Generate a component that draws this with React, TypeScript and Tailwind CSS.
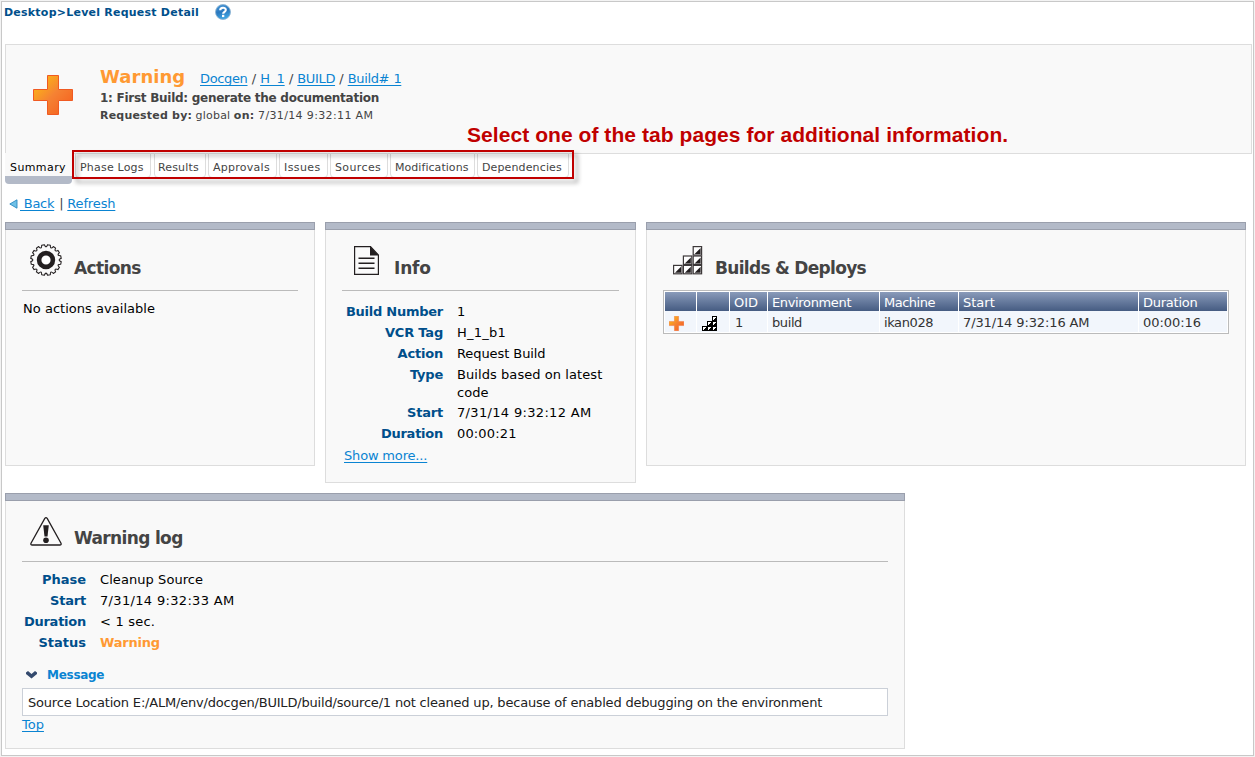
import React from "react";

type Row = { label: string; value: string; labelTrack?: string; tone?: string; gap?: string };

const link = "text-[#0a84d2] underline underline-offset-2 decoration-1 [text-decoration-skip-ink:none]";

function PlusIcon({ size }: { size: number }) {
  return (
    <svg width={size} height={size} viewBox="0 0 40 40" className="block shrink-0">
      <defs>
        <linearGradient id={`plus${size}`} x1="0" y1="0" x2="1" y2="1">
          <stop offset="0.1" stopColor="#fdb813" />
          <stop offset="0.5" stopColor="#f58233" />
          <stop offset="1" stopColor="#f55a1a" />
        </linearGradient>
      </defs>
      <path
        d="M14.5 .5h11v14h14v11h-14v14h-11v-14H.5v-11h14z"
        fill={`url(#plus${size})`}
        stroke="#f05a22"
        strokeWidth="1"
      />
    </svg>
  );
}

function HelpIcon() {
  return (
    <svg width="16" height="16" viewBox="0 0 16 16" className="block">
      <defs>
        <linearGradient id="help" x1="0" y1="0" x2=".3" y2="1">
          <stop offset="0" stopColor="#4a9bdc" />
          <stop offset=".55" stopColor="#2a78be" />
          <stop offset="1" stopColor="#3fa4e2" />
        </linearGradient>
      </defs>
      <circle cx="8" cy="8" r="7.5" fill="url(#help)" stroke="#8fb4d2" strokeWidth=".9" />
      <path d="M5.2 6.3C5.2 2.9 10.8 2.9 10.8 6C10.8 7.8 8.2 7.8 8.1 9.8" fill="none" stroke="#fff" strokeWidth="2.1" />
      <rect x="7" y="10.8" width="2.3" height="2.3" fill="#fff" />
    </svg>
  );
}

function GearIcon() {
  const n = 16;
  const pts: string[] = [];
  for (let i = 0; i < n; i++) {
    const a = ((i + 0.5) * 2 * Math.PI) / n;
    const at = (r: number, o: number) =>
      `${(16 + r * Math.cos(a + o)).toFixed(2)} ${(16 + r * Math.sin(a + o)).toFixed(2)}`;
    const start = at(15.3, -0.09);
    pts.push(`${i ? "" : "M" + start}${i ? "L" + start : ""}L${at(15.3, 0.09)}Q${at(11, 0.196)} ${at(15.3, 0.303)}`);
  }
  return (
    <svg width="32" height="32" viewBox="0 0 32 32" className="block">
      <path d={pts.join("") + "Z"} fill="#fafafa" stroke="#231f20" strokeWidth="1.1" strokeLinejoin="round" />
      <circle cx="16" cy="16" r="6.9" fill="#fff" stroke="#231f20" strokeWidth="4.6" />
    </svg>
  );
}

function PageIcon() {
  return (
    <svg width="26" height="30" viewBox="0 0 26 30" className="block">
      <path d="M.6 .6H16.5L24.4 9V28.4H.6z" fill="#fafafa" stroke="#231f20" strokeWidth="1.2" />
      <path d="M16 .3L24.8 9.5H16z" fill="#231f20" />
      <path d="M4.5 12.3H20.5M4.5 17.3H20.5M4.5 22.3H20.5" stroke="#231f20" strokeWidth="1.6" />
    </svg>
  );
}

const cells = [
  [19.6, 0],
  [9.8, 9.4],
  [19.6, 9.4],
  [0, 18.8],
  [9.8, 18.8],
  [19.6, 18.8],
];

function StairsIcon() {
  return (
    <svg width="30" height="29" viewBox="0 0 30 29" className="block">
      {cells.map(([x, y]) => (
        <g key={`${x}-${y}`}>
          <rect x={x + 0.6} y={y + 0.6} width="8.4" height="8.4" fill="#fff" stroke="#3c3839" strokeWidth="1.2" />
          <path d={`M${x + 8} ${y + 2}V${y + 8}H${x + 2}z`} fill="#231f20" />
        </g>
      ))}
    </svg>
  );
}

function SmallStairsIcon() {
  return (
    <svg width="15" height="15" viewBox="0 0 15 15" className="block" shapeRendering="crispEdges">
      <path d="M10 0h5v15H0v-5h5V5h5z" fill="#000" />
      {[
        [10, 0],
        [5, 5],
        [10, 5],
        [0, 10],
        [5, 10],
        [10, 10],
      ].map(([x, y]) => (
        <path key={`${x}-${y}`} d={`M${x + 1} ${y + 1}h3v1h-1v1h-1v1h-1z`} fill="#fff" />
      ))}
    </svg>
  );
}

function WarnIcon() {
  return (
    <svg width="32" height="29" viewBox="0 0 32 29" className="block">
      <path
        d="M14.8 1.4Q16 -.1 17.2 1.4L31 26.3Q31.6 28 29.8 28H2.2Q.4 28 1 26.3z"
        fill="#fafafa"
        stroke="#231f20"
        strokeWidth="1.3"
      />
      <path d="M13.2 8.2H18.8L17.5 19.5H14.5z" fill="#231f20" />
      <circle cx="16" cy="23.2" r="2.8" fill="#231f20" />
    </svg>
  );
}

function Panel({
  className,
  icon,
  title,
  titleClass,
  iconClass,
  rule = true,
  children,
}: {
  className: string;
  icon: React.ReactNode;
  title: string;
  titleClass: string;
  iconClass: string;
  rule?: boolean;
  children: React.ReactNode;
}) {
  return (
    <section className={`flex shrink-0 flex-col ${className}`}>
      <div className="h-2 shrink-0 border border-[#9a9fac] bg-[#b3bac8]" />
      <div className="flex grow flex-col border border-t-0 border-[#dddddd] bg-[#f9f9f9] px-4">
        <div className={`flex h-[61px] shrink-0 ${rule ? "border-b border-[#bbbbbb]" : ""}`}>
          <div className={`w-[52px] shrink-0 ${iconClass}`}>{icon}</div>
          <h2 className={`text-[17px] leading-6 font-bold whitespace-nowrap text-[#444] ${titleClass}`}>{title}</h2>
        </div>
        {children}
      </div>
    </section>
  );
}

function Details({ rows, labelWidth }: { rows: Row[]; labelWidth: string }) {
  return (
    <dl>
      {rows.map((r) => (
        <div key={r.label} className={`flex text-[13px] leading-[18px] ${r.gap ?? "mb-[3px]"}`}>
          <dt
            className={`shrink-0 text-right font-bold whitespace-nowrap text-[#004f8b] ${labelWidth} ${r.labelTrack ?? "tracking-[-0.2px]"}`}
          >
            {r.label}
          </dt>
          <dd className={`ml-[14px] whitespace-pre-line ${r.tone ?? "text-black"}`}>{r.value}</dd>
        </div>
      ))}
    </dl>
  );
}

const tabs = [
  { name: "Phase Logs", box: "w-[76px] mr-[3px] pl-1 tracking-[0.2px]" },
  { name: "Results", box: "w-[52px] mr-[2px] pl-[3px] tracking-[0.15px]" },
  { name: "Approvals", box: "w-[69px] mr-[2px] pl-1 tracking-[0.26px]" },
  { name: "Issues", box: "w-[49px] mr-[2px] pl-1 tracking-[0.4px]" },
  { name: "Sources", box: "w-[58px] mr-[2px] pl-1 tracking-[0.38px]" },
  { name: "Modifications", box: "w-[85px] mr-[2px] pl-1 tracking-[0.05px]" },
  { name: "Dependencies", box: "w-[92px] pl-1 tracking-[0.13px]" },
];

const infoRows: Row[] = [
  { label: "Build Number", value: "1", labelTrack: "tracking-[-0.25px]" },
  { label: "VCR Tag", value: "H_1_b1", tone: "text-black tracking-[0.25px]" },
  { label: "Action", value: "Request Build", tone: "text-black tracking-[-0.08px]" },
  {
    label: "Type",
    value: "Builds based on latest\ncode",
    gap: "mb-[2px]",
    tone: "text-black tracking-[0.07px]",
  },
  { label: "Start", value: "7/31/14 9:32:12 AM", tone: "text-black tracking-[0.33px]" },
  { label: "Duration", value: "00:00:21", labelTrack: "tracking-[-0.25px]", tone: "text-black tracking-[0.15px]" },
];

const logRows: Row[] = [
  { label: "Phase", value: "Cleanup Source", labelTrack: "tracking-[0px]", tone: "text-black tracking-[0.07px]" },
  { label: "Start", value: "7/31/14 9:32:33 AM", tone: "text-black tracking-[0.33px]" },
  { label: "Duration", value: "< 1 sec.", labelTrack: "tracking-[-0.25px]", tone: "text-black tracking-[0.2px]" },
  {
    label: "Status",
    value: "Warning",
    labelTrack: "tracking-[0px]",
    tone: "font-bold tracking-[-0.2px] text-[#ff9933]",
  },
];

const columns = [
  { title: "", width: "w-[31px]", titleClass: "", cellClass: "" },
  { title: "", width: "w-[32px]", titleClass: "", cellClass: "" },
  { title: "OID", width: "w-[37px]", titleClass: "", cellClass: "pl-[5px]" },
  { title: "Environment", width: "w-[111px]", titleClass: "tracking-[-0.35px]", cellClass: "tracking-[-0.4px]" },
  { title: "Machine", width: "w-[78px]", titleClass: "tracking-[-0.5px]", cellClass: "tracking-[-0.4px]" },
  { title: "Start", width: "w-[179px]", titleClass: "", cellClass: "tracking-[-0.12px]" },
  { title: "Duration", width: "w-[88px]", titleClass: "tracking-[-0.25px]", cellClass: "tracking-[-0.05px]" },
];

const build: React.ReactNode[] = [
  <PlusIcon size={15} />,
  <SmallStairsIcon />,
  "1",
  "build",
  "ikan028",
  "7/31/14 9:32:16 AM",
  "00:00:16",
];

export default function App() {
  return (
    <div className="h-[757px] w-[1255px] overflow-hidden bg-[#f3f3f3] pt-px pl-px font-['DejaVu_Sans',sans-serif] text-[13px]">
      <div className="flex h-[755px] w-[1253px] flex-col border border-[#c8c8c8] bg-white pl-[3px]">
        <div className="flex h-[42px] shrink-0 pt-[2px]">
          <div className="-ml-px w-[211px] shrink-0 text-[11px] leading-[18px] font-bold tracking-[0.23px] whitespace-nowrap text-[#004f8b]">
            Desktop&gt;Level Request Detail
          </div>
          <HelpIcon />
        </div>

        <header className="flex h-[110px] w-[1247px] shrink-0 border border-[#dddddd] bg-[#f9f9f9]">
          <div className="w-[94px] shrink-0 pt-[30px] pl-[27px]">
            <PlusIcon size={40} />
          </div>
          <div className="w-[362px] shrink-0 whitespace-nowrap text-[#444]">
            <div className="flex h-6 items-baseline pt-5 leading-6">
              <span className="w-[100px] text-[18px] font-bold tracking-[0.05px] text-[#ff9933]">Warning</span>
              <span className="text-[13px] tracking-[-0.35px] [word-spacing:0.5px]">
                <a className={link}>Docgen</a> / <a className={`${link} tracking-[0px]`}>H_1</a> /{" "}
                <a className={link}>BUILD</a> / <a className={link}>Build# 1</a>
              </span>
            </div>
            <div className="mt-[20px] text-[12px] leading-[18px] font-bold tracking-[-0.27px]">
              1: First Build: generate the documentation
            </div>
            <div className="text-[11px] leading-[17px]">
              <b className="tracking-[0.2px]">Requested by:</b> <span className="tracking-[0.2px]">global</span>{" "}
              <b className="tracking-[0.3px]">on:</b> <span className="tracking-[0.36px]">7/31/14 9:32:11 AM</span>
            </div>
          </div>
          <div className="mt-[78px] pl-[5px] font-['Liberation_Sans',sans-serif] text-[21px] leading-6 font-bold tracking-[0.06px] whitespace-nowrap text-[#c00000]">
            Select one of the tab pages for additional information.
          </div>
        </header>

        <nav className="relative -mt-px flex h-[31px] shrink-0 text-[11px] whitespace-nowrap text-[#444]">
          <div className="mr-[3px] h-[31px] w-[67px] rounded-b border-b-[8px] border-[#b3bac8] bg-[#f9f9f9] pl-[5px] leading-[30px] tracking-[0.4px] text-black">
            Summary
          </div>
          {tabs.map((t) => (
            <div
              key={t.name}
              className={`h-[25px] shrink-0 rounded-b border border-[#dddddd] bg-white leading-[28px] ${t.box}`}
            >
              {t.name}
            </div>
          ))}
          <div className="absolute -top-[3px] left-[67px] h-[29px] w-[502px] border-2 border-[#c00000] drop-shadow-[4px_4px_2px_rgba(0,0,0,0.35)]" />
        </nav>

        <div className="flex h-[38px] shrink-0 items-start pt-[11px] pl-1 leading-[18px] tracking-[-0.3px]">
          <svg width="9" height="10" viewBox="0 0 9 10" className="mt-[4px] mr-[2px]">
            <path d="M8 .8V9.2L.8 5z" fill="#6fc0e6" stroke="#2d8ac2" strokeWidth=".9" />
          </svg>
          <a className={`${link} whitespace-pre`}> Back</a>
          <span className="mr-[4px] ml-[5px] text-[#444]">|</span>
          <a className={`${link} tracking-[-0.15px]`}>Refresh</a>
        </div>

        <main>
          <div className="flex items-start gap-[10px]">
            <Panel
              className="h-[244px] w-[310px]"
              title="Actions"
              titleClass="mt-[26px] tracking-[-0.6px]"
              icon={<GearIcon />}
              iconClass="pt-[14px] pl-2"
            >
              <p className="mt-[9px] pl-px leading-[18px] tracking-[0.03px] text-black">No actions available</p>
            </Panel>
            <Panel
              className="h-[261px] w-[311px]"
              title="Info"
              titleClass="mt-[26px] tracking-[-0.2px]"
              icon={<PageIcon />}
              iconClass="pt-4 pl-3"
            >
              <div className="mt-3">
                <Details rows={infoRows} labelWidth="w-[101px]" />
              </div>
              <div className="mt-px pl-[2px] leading-[18px]">
                <a className={`${link} tracking-[-0.17px]`}>Show more...</a>
              </div>
            </Panel>
            <Panel
              className="h-[244px] w-[600px]"
              title="Builds & Deploys"
              titleClass="mt-[26px] tracking-[-0.7px]"
              icon={<StairsIcon />}
              iconClass="pt-4 pl-[10px]"
              rule={false}
            >
              <div className="-mt-px w-[566px] border border-[#bbbbbb] bg-white p-px">
                <div className="flex h-[19px] gap-px bg-white">
                  {columns.map((c, i) => (
                    <div
                      key={i}
                      className={`shrink-0 bg-linear-to-b from-[#8a9bba] to-[#465c82] pl-1 leading-[22px] text-white ${c.width} ${c.titleClass}`}
                    >
                      {c.title}
                    </div>
                  ))}
                </div>
                <div className="flex h-[21px] gap-px">
                  {columns.map((c, i) => (
                    <div
                      key={i}
                      className={`shrink-0 bg-[#f2f6fc] pl-1 leading-6 text-[#333] ${c.width} ${c.cellClass}`}
                    >
                      {i < 2 ? <div className={i ? "pt-[5px] pl-px" : "pt-[5px]"}>{build[i]}</div> : build[i]}
                    </div>
                  ))}
                </div>
              </div>
            </Panel>
          </div>

          <Panel
            className="mt-[10px] h-[256px] w-[900px]"
            title="Warning log"
            titleClass="mt-[25px] tracking-[-0.65px]"
            icon={<WarnIcon />}
            iconClass="pt-4 pl-2"
          >
            <div className="mt-[9px]">
              <Details rows={logRows} labelWidth="w-[64px]" />
            </div>
            <div className="mt-[11px] flex text-[12px] leading-[18px] font-bold tracking-[-0.28px] text-[#0a84d2]">
              <svg width="11" height="8" viewBox="0 0 11 8" className="mt-[5px] mr-[10px] ml-1">
                <path d="M0 1.5L2 0 5.5 3 9 0 11 1.5V3L5.5 7.5 0 3z" fill="#344a6e" />
              </svg>
              Message
            </div>
            <div className="mt-[4px] h-7 border border-[#cbd0d8] bg-white pl-[5px] leading-[27px] tracking-[-0.19px] text-[#222]">
              Source Location E:/ALM/env/docgen/BUILD/build/source/1 not cleaned up, because of enabled debugging on the
              environment
            </div>
            <div className="leading-[18px]">
              <a className={link}>Top</a>
            </div>
          </Panel>
        </main>
      </div>
    </div>
  );
}
